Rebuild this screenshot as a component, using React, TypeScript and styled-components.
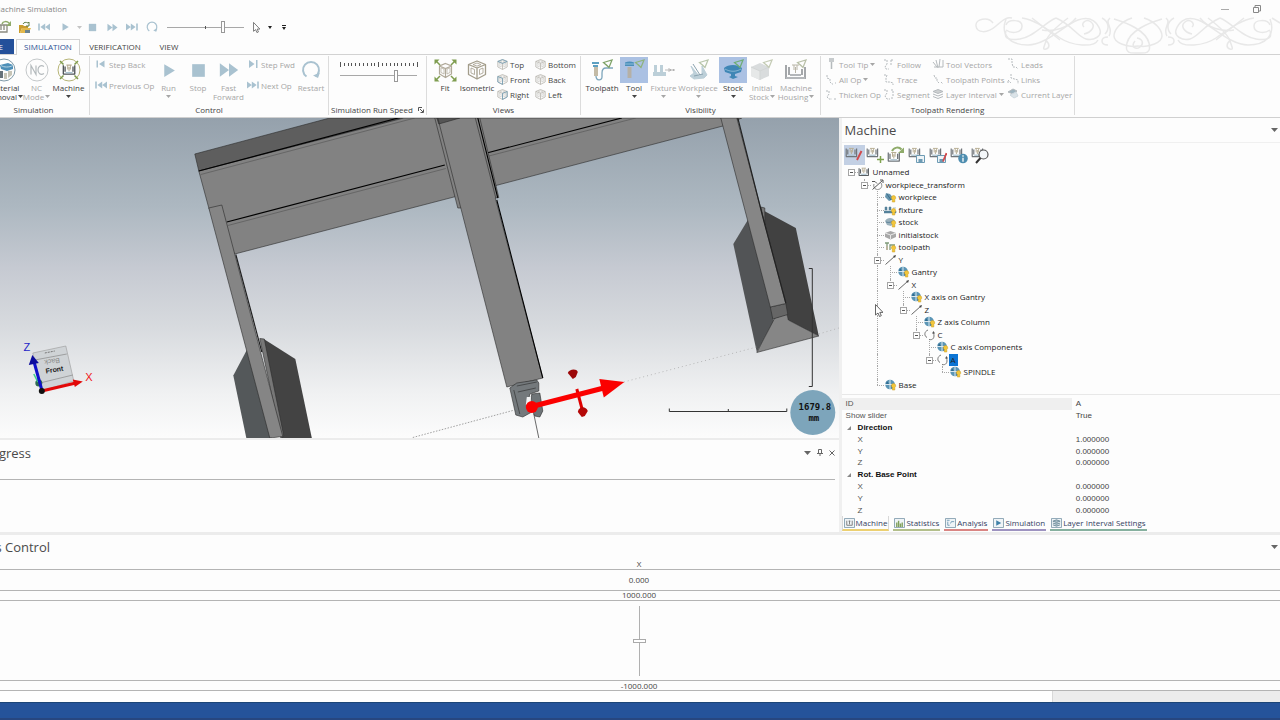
import React from 'react';
import styled, { createGlobalStyle } from 'styled-components';

const ui = '"Open Sans", "Noto Sans", sans-serif';
const line = '#b4b4b4';
const steel = '#a9c2d0';
const off = '#a6a6a6';

const Global = createGlobalStyle`
  *, *::before, *::after { box-sizing: border-box; }
  body { margin: 0; background: #fdfdfd; color: #444; font: 8px/9px ${ui}; }
  button, input { font: inherit; color: inherit; margin: 0; padding: 0; border: 0; background: none; }
  h1, h2, ul { margin: 0; padding: 0; font-weight: 400; list-style: none; }
  svg { display: block; flex: none; }
`;

/* ---------- frame ---------- */

const Page = styled.div`
  display: flex;
  flex-direction: column;
  min-height: 100vh;
  overflow: hidden;
`;
const Header = styled.header`
  position: relative;
  flex: none;
`;
const TitleBar = styled.div`
  display: flex;
  justify-content: space-between;
  align-items: center;
  height: 17px;
`;
const AppTitle = styled.h1`
  display: flex;
  justify-content: flex-end;
  width: 67px;
  overflow: hidden;
  white-space: nowrap;
  font-size: 8px;
  color: #858585;
`;
const WindowButtons = styled.div`
  display: flex;
  gap: 15px;
  padding-right: 15px;
`;
const PlainButton = styled.button`
  display: flex;
  align-items: center;
  justify-content: center;
  width: 17px;
  height: 15px;
`;
const Ornament = styled.svg`
  position: absolute;
  right: 0;
  top: 17px;
`;
const QuickBar = styled.div`
  display: flex;
  align-items: center;
  height: 21px;
  padding-bottom: 1px;
`;
const QuickButton = styled.button<{ $w: number }>`
  display: flex;
  align-items: center;
  justify-content: center;
  width: ${p => p.$w}px;
  height: 18px;
`;
const QuickClipped = styled(QuickButton)`
  justify-content: flex-end;
  overflow: hidden;
  padding-right: 2px;
`;
const Range = styled.input`
  appearance: none;
  display: block;
  width: 77px;
  height: 13px;
  background: linear-gradient(#a8a8a8, #a8a8a8) center / 100% 1px no-repeat;
  &::-webkit-slider-thumb {
    appearance: none;
    width: 4px;
    height: 12px;
    border: 1px solid #999;
    background: #fff;
  }
`;
const QuickRange = styled(Range)`
  margin: 0 3px 0 5px;
  background: linear-gradient(#555, #555) center / 1px 3px no-repeat, linear-gradient(#a8a8a8, #a8a8a8) center / 100% 1px no-repeat;
`;

const TabRow = styled.nav`
  display: flex;
  align-items: flex-end;
  height: 17px;
  border-bottom: 1px solid #d2d2d2;
`;
const FileTab = styled.button`
  display: flex;
  justify-content: flex-end;
  align-items: center;
  width: 14px;
  height: 15px;
  margin-right: 2px;
  padding-right: 11px;
  padding-bottom: 1px;
  overflow: hidden;
  background: #24509a;
  color: #fff;
`;
const RibbonTab = styled.button<{ $active?: boolean; $w: number }>`
  width: ${p => p.$w}px;
  height: ${p => (p.$active ? 16 : 15)}px;
  padding-bottom: ${p => (p.$active ? 3 : 1)}px;
  margin-bottom: ${p => (p.$active ? -1 : 0)}px;
  border: ${p => (p.$active ? '1px solid #d2d2d2' : '0')};
  border-bottom: 0;
  background: ${p => (p.$active ? '#fdfdfd' : 'none')};
  color: ${p => (p.$active ? '#2b4f94' : '#444')};
`;

/* ---------- ribbon ---------- */

const Ribbon = styled.div`
  display: flex;
  height: 63px;
  padding: 1px 0 2px;
  border-bottom: 1px solid #d0d0d0;
`;
const GroupClip = styled.section<{ $w: number }>`
  display: flex;
  justify-content: flex-end;
  flex: none;
  width: ${p => p.$w}px;
  border-right: 1px solid #dcdcdc;
  overflow: hidden;
`;
const GroupInner = styled.div<{ $w?: number }>`
  display: flex;
  flex-direction: column;
  flex: none;
  width: ${p => (p.$w ? p.$w + 'px' : '100%')};
`;
const GroupBody = styled.div<{ $pad: number }>`
  display: flex;
  height: 49px;
  padding-left: ${p => p.$pad}px;
`;
const GroupName = styled.div`
  display: flex;
  align-items: center;
  justify-content: center;
  gap: 5px;
  height: 11px;
`;
const BigButton = styled.button<{ $w: number; $dim?: boolean }>`
  display: flex;
  flex-direction: column;
  align-items: center;
  width: ${p => p.$w}px;
  height: 47px;
  padding-top: 1px;
  flex: none;
  white-space: nowrap;
  color: ${p => (p.$dim ? off : '#3c3c3c')};
`;
const BigIcon = styled.span<{ $on?: boolean }>`
  display: flex;
  align-items: center;
  justify-content: center;
  width: 28px;
  height: 26px;
  background: ${p => (p.$on ? '#abc1e3' : 'none')};
`;
const LabelLine = styled.span`
  display: flex;
  align-items: center;
  gap: 1px;
  height: 9px;
`;
const SmallColumn = styled.div<{ $w: number; $gap?: number; $pad?: number }>`
  display: flex;
  flex-direction: column;
  gap: ${p => p.$gap ?? 5}px;
  width: ${p => p.$w}px;
  padding: 3px 0 0 ${p => p.$pad ?? 0}px;
  flex: none;
`;
const SmallButton = styled.button<{ $dim?: boolean }>`
  display: flex;
  align-items: center;
  gap: 2px;
  height: 10px;
  white-space: nowrap;
  color: ${p => (p.$dim ? off : '#444')};
`;
const SpeedBox = styled.label`
  display: flex;
  flex-direction: column;
  gap: 1px;
  padding: 6px 0 0 6px;
`;

/* ---------- work area ---------- */

const Work = styled.main`
  display: grid;
  grid-template-columns: minmax(0, 19fr) minmax(0, 10fr);
  flex: 1;
  border-bottom: 3px solid #ececec;
`;
const LeftColumn = styled.div`
  display: flex;
  flex-direction: column;
  min-height: 0;
`;
const Viewport = styled.div`
  flex: 1;
  min-height: 320px;
  position: relative;
  background: linear-gradient(#95a1ac, #adb8c1 28%, #c6cad2 47%, #d7dade 65%, #f0f1f2 86%, #fcfcfc);
`;
const Scene = styled.svg`
  position: absolute;
  inset: 0;
  width: 100%;
  height: 100%;
`;
const ProgressPanel = styled.section`
  flex: none;
  height: 94px;
  border-top: 2px solid #ececec;
`;
const PanelHead = styled.div<{ $h: number; $pad: number }>`
  display: flex;
  align-items: center;
  justify-content: space-between;
  height: ${p => p.$h}px;
  padding-right: ${p => p.$pad}px;
`;
const PanelTitle = styled.h2`
  font-size: 13px;
  line-height: 16px;
  color: #4a4a4a;
  white-space: nowrap;
`;
const ClippedTitle = styled(PanelTitle)<{ $w: number }>`
  display: flex;
  justify-content: flex-end;
  width: ${p => p.$w}px;
  overflow: hidden;
`;
const HeadTools = styled.div`
  display: flex;
`;
const HeadTool = styled.button`
  display: flex;
  align-items: center;
  justify-content: center;
  width: 12px;
  height: 12px;
`;
const ProgressBody = styled.div`
  margin: 14px 4px 0 0;
  border-top: 1px solid ${line};
`;

const MachinePanel = styled.section`
  display: flex;
  flex-direction: column;
  border-left: 3px solid #f0f0f0;
  min-width: 0;
`;
const MachineHead = styled(PanelHead)`
  padding-left: 3px;
  border-bottom: 1px solid #f0f0f0;
`;
const MachineTools = styled.div`
  display: flex;
  height: 23px;
  padding: 2px 0 0 2px;
`;
const MachineTool = styled.button<{ $on?: boolean }>`
  display: flex;
  align-items: center;
  justify-content: center;
  width: 21px;
  height: 20px;
  background: ${p => (p.$on ? '#c3d0e4' : 'none')};
`;
const Tree = styled.ul`
  position: relative;
  display: grid;
  grid-auto-rows: 1fr;
  height: 225px;
  padding-left: 3px;
  color: #222;
`;
const TreeRow = styled.li`
  display: flex;
  align-items: center;
`;
const Guide = styled.span<{ $kind: string }>`
  position: relative;
  align-self: stretch;
  width: 13px;
  &::before {
    content: '';
    position: absolute;
    left: 6px;
    top: 0;
    height: ${p => (p.$kind === 'last' ? '50%' : '100%')};
    border-left: ${p => (p.$kind === 'blank' || p.$kind === 'root' ? '0' : '1px dotted #a8a8a8')};
  }
  &::after {
    content: '';
    position: absolute;
    left: 6px;
    top: 50%;
    width: 7px;
    border-top: ${p => (p.$kind === 'last' || p.$kind === 'tee' || p.$kind === 'root' ? '1px dotted #a8a8a8' : '0')};
  }
`;
const Expander = styled.button`
  position: absolute;
  z-index: 1;
  left: 3px;
  top: 3px;
  width: 7px;
  height: 7px;
  border: 1px solid #a5a5a5;
  background: linear-gradient(#555, #555) center / 3px 1px no-repeat #fff;
`;
const NodeIcon = styled.span`
  display: flex;
  justify-content: center;
  width: 13px;
`;
const NodeName = styled.span<{ $on?: boolean }>`
  padding: 1px 2px;
  line-height: 10px;
  background: ${p => (p.$on ? '#0b74d4' : 'none')};
`;
const Pointer = styled.svg`
  position: absolute;
  left: 33px;
  top: 138px;
`;
const Properties = styled.div`
  margin-top: 3px;
  padding-top: 3px;
  border-top: 1px solid #e8e8e8;
`;
const PropertyTable = styled.table`
  width: 100%;
  height: 118px;
  border-collapse: collapse;
  table-layout: fixed;
  font: 8px/9px "Liberation Sans", Arial, sans-serif;
  td, th { padding: 0 0 0 4px; text-align: left; font-weight: 400; }
`;
const NameCell = styled.th<{ $deep?: boolean; $first?: boolean; $bold?: boolean }>`
  && { padding-left: ${p => (p.$deep ? 16 : 4)}px; font-weight: ${p => (p.$bold ? 700 : 400)}; }
  width: 52.5%;
  color: ${p => (p.$bold ? '#111' : '#555')};
  background: ${p => (p.$first ? '#efefef' : 'none')};
`;
const Fold = styled.span`
  display: inline-flex;
  width: 12px;
  padding-left: 1px;
`;
const PanelTabs = styled.nav`
  display: flex;
  gap: 4px;
  height: 15px;
`;
const PanelTab = styled.button<{ $c: string; $on?: boolean }>`
  display: flex;
  align-items: center;
  gap: 1px;
  height: 15px;
  padding: 0 1px;
  white-space: nowrap;
  color: #33415f;
  border: ${p => (p.$on ? '1px solid #d8d8d8' : '0')};
  border-top: 0;
  border-bottom: 2px solid ${p => p.$c};
`;

/* ---------- axis control ---------- */

const AxisPanel = styled.section`
  flex: none;
`;
const AxisCell = styled.div<{ $h: number }>`
  display: flex;
  align-items: center;
  justify-content: center;
  height: ${p => p.$h}px;
  padding-right: 2px;
  border-bottom: 1px solid ${line};
`;
const AxisText = styled(AxisCell)`
  padding-bottom: 2px;
`;
const VerticalRange = styled.input`
  appearance: none;
  writing-mode: vertical-lr;
  direction: rtl;
  width: 13px;
  height: 70px;
  background: linear-gradient(#b0b0b0, #b0b0b0) center / 1px 100% no-repeat;
  &::-webkit-slider-thumb {
    appearance: none;
    width: 13px;
    height: 4px;
    border: 1px solid #aaa;
    background: #fff;
  }
`;
const ScrollTrack = styled.div`
  height: 11px;
  background: #ececec;
`;
const ScrollThumb = styled.div`
  width: 82.3%;
  height: 11px;
  background: #fefefe;
  border-right: 1px solid #d8d8d8;
`;
const Footer = styled.footer`
  flex: none;
  height: 18px;
  background: #25539a;
  border-top: 1px solid #1c4577;
  border-bottom: 2px solid #27467f;
`;

/* ---------- drawings ---------- */

const Caret = ({ c = '#444' }: { c?: string }) => (
  <svg width="5" height="3" viewBox="0 0 5 3"><path d="M0 0h5L2.5 3z" fill={c} /></svg>
);
const HeadCaret = () => (
  <svg width="7" height="4" viewBox="0 0 7 4"><path d="M0 0h7L3.500 4z" fill="#666" /></svg>
);

const Transport = ({ kind, s = 12, c = steel }: { kind: string; s?: number; c?: string }) => {
  const d: Record<string, string> = {
    play: 'M3 1.500L10.500 6L3 10.500z',
    stop: 'M2 2h8v8H2z',
    ff: 'M0.500 2L6 6L0.500 10zM6 2L11.500 6L6 10z',
    end: 'M0 2.500L4.800 6L0 9.500zM4.800 2.500L9.600 6L4.800 9.500zM10.200 2.500h1.600v7h-1.600z',
    start: 'M12 2.500L7.200 6L12 9.500zM7.200 2.500L2.400 6L7.200 9.500zM.2 2.500h1.600v7H.2z',
    back: 'M9.500 2.500L4 6L9.500 9.500zM1.500 2.500h1.500v7H1.500z',
    fwd: 'M2 2L7.500 6L2 10zM9 2h1.500v8H9z',
  };
  return <svg width={s} height={s} viewBox="0 0 12 12"><path d={d[kind]} fill={c} /></svg>;
};
const Restart = ({ s }: { s: number }) => (
  <svg width={s} height={s} viewBox="0 0 20 20" fill="none" stroke={steel} strokeWidth="2">
    <path d="M5.500 16.500A8 8 0 1 1 14.500 16.500" /><path d="M19 12.500l-2 5.500-5-2.500z" fill={steel} stroke="none" />
  </svg>
);

const MachineShape = ({ c = '#5a5f63' }: { c?: string }) => (
  <g fill="none" stroke={c} strokeWidth="1.200">
    <path d="M1.500 3v10M14.500 3v10M3.500 4.500v6M12.500 4.500v6M1 13.200h14" strokeWidth="1.500" />
    <path d="M5 3h6M6.500 3v5M9.500 3v5M8 5v5" stroke="#b7ad93" />
    <path d="M4 11.500h8" stroke={steel} strokeWidth="1.500" />
  </g>
);

type MachineKind = 'edit' | 'add' | 'open' | 'save' | 'saveEdit' | 'info' | 'find';
const MachineToolIcon = ({ kind }: { kind: MachineKind }) => (
  <svg width="18" height="18" viewBox="0 0 18 18" fill="none">
    <g transform={kind === 'open' ? 'translate(0 4) scale(.85)' : 'scale(.8)'}><MachineShape c="#70757a" /></g>
    {kind === 'edit' && <path d="M16.500 5L12 14" stroke="#d2494b" strokeWidth="2" />}
    {kind === 'add' && <path d="M14.500 10v7M11 13.500h7" stroke="#7fa24f" strokeWidth="1.500" />}
    {kind === 'open' && <><path d="M5 5c2-4 7-4.500 9.500-1.500" stroke="#8fab6a" strokeWidth="2" /><path d="M17 1.500v5.500h-6z" fill="#8fab6a" /></>}
    {(kind === 'save' || kind === 'saveEdit') && (
      <><path d="M8.500 9.500h8v7h-8z" fill="#eef4f7" stroke="#6d9bb4" /><path d="M10.500 13h4v3.500h-4z" fill="#6d9bb4" /></>
    )}
    {kind === 'saveEdit' && <path d="M17.500 7L14 15.500" stroke="#d2494b" strokeWidth="1.800" />}
    {kind === 'info' && <><circle cx="13" cy="12.500" r="4.800" fill="#4f8eb0" /><path d="M13 9.200v1.500M13 11.700v4" stroke="#fff" strokeWidth="1.300" /></>}
    {kind === 'find' && <><circle cx="12.500" cy="8.500" r="4.500" fill="#f4f7f9" stroke="#555" strokeWidth="1.200" /><path d="M9.500 12L5 17" stroke="#333" strokeWidth="2" /></>}
  </svg>
);

const RoundIcon = ({ kind }: { kind: 'material' | 'nc' | 'machine' }) => (
  <svg width="24" height="24" viewBox="0 0 24 24" fill="none">
    <circle cx="12" cy="12" r="11" stroke={kind === 'nc' ? '#c4c8ca' : kind === 'machine' ? '#b7b577' : '#7f9aa8'} />
    {kind === 'material' && (
      <><path d="M8 7l8-2 5 2v4l-6 2-6-2z" fill="#4d8fb8" /><path d="M9 7.500c3 2 8 2 12 0" stroke="#b6d3e2" /><path d="M3 14h6v6H5zM12 15h3v6h-3zM16 13h4v4l-4 3z" fill="#c6c4b6" /><path d="M8 13h3v7H8z" fill="#66727a" /></>
    )}
    {kind === 'nc' && <path d="M6 16.500v-9l5 9v-9M19 8.500c-3.500-2-6 .3-6 3.500s2.500 5.500 6 3.500" stroke="#b4babd" strokeWidth="1.200" />}
    {kind === 'machine' && (
      <><g transform="translate(5 4.500) scale(.88)"><MachineShape c="#4d5256" /></g>
        <path d="M3 3l3.500 3.500M21 3l-3.500 3.500M3 21l3.500-3.500M21 21l-3.500-3.500" stroke="#7d9a4c" strokeWidth="1.500" /></>
    )}
  </svg>
);

const Cube = ({ s, face = '' }: { s: number; face?: string }) => {
  const w = s > 15 ? 1.3 : 1.4;
  return (
    <svg width={s} height={s} viewBox="0 0 20 20" fill="none" stroke={s > 15 ? '#a39d8b' : '#b3b1a9'} strokeWidth={w} strokeLinejoin="round">
      <path d="M10 1L18.500 4.500V14.500L10 19L1.500 14.500V4.500z" />
      <path d="M1.500 4.500L10 8L18.500 4.500M10 8v11" />
      <path d="M4 8l3.500 1.500v5L4 13zM16 8l-3.500 1.500v5L16 13zM10 3L6 4.600l4 1.500 4-1.500z" strokeWidth=".8" />
      {face === 'top' && <path d="M10 1L18.500 4.500L10 8L1.500 4.500z" stroke="#6f9cb5" />}
      {face === 'front' && <path d="M1.500 4.500L10 8V19L1.500 14.500z" stroke="#6f9cb5" />}
      {face === 'right' && <path d="M18.500 4.500L10 8V19L18.500 14.500z" stroke="#6f9cb5" />}
    </svg>
  );
};
const FitIcon = () => (
  <svg width="23" height="23" viewBox="0 0 23 23" fill="none">
    <path d="M11.500 4.500l6 2.500v8l-6 3.500-6-3.500V7zM5.500 7l6 2.500 6-2.500M11.500 9.500v9" stroke="#b0a999" strokeWidth="1.200" />
    <path d="M7 8.800l3 1.200v5L7 13.500zM16 8.800L13 10v5l3-1.500z" stroke="#b0a999" strokeWidth=".7" />
    <path d="M2 2l4 4M21 2l-4 4M2 21l4-4M21 21l-4-4" stroke="#7f9d50" strokeWidth="1.500" />
    <path d="M.5 .5h5L.5 5.500zM22.500 .5h-5l5 5zM.5 22.500h5l-5-5zM22.500 22.500h-5l5-5z" fill="#7f9d50" />
  </svg>
);

const Flag = ({ c = '#8fb37e' }: { c?: string }) => <path d="M14.500 4.500L23 2L20 9.500zM17 6.500l3 3" stroke={c} strokeWidth="1.300" fill="none" />;
const VisIcon = ({ kind }: { kind: string }) => (
  <svg width="26" height="24" viewBox="0 0 26 24" fill="none">
    {kind === 'toolpath' && (
      <><path d="M3 4h7v2H3zM4 7h5v2H4z" fill="#5d9fc0" /><path d="M5 9h4v9H5z" fill="#c4bba6" />
        <path d="M7 18c0 5 6 5 6 1v-4c0-4 2-5 4-5h7" stroke="#7da6bc" strokeWidth="1.300" /><Flag c="#7fa368" /></>
    )}
    {kind === 'tool' && (
      <><path d="M4 4.500c3-1.500 6-1.500 9 0v3.500H4z" fill="#4a8fbb" /><path d="M4 6h9" stroke="#8dbdd8" /><path d="M6.500 9h4v11h-4z" fill="#b5b0a6" /><Flag /></>
    )}
    {kind === 'fixture' && (
      <><path d="M2 14h13v4H2zM3 7h3v7H3zM9 7h3v7H9z" fill="#bccfd8" />
        <path d="M14 12h4M18 10v4" stroke="#bbb" /><path d="M18.500 12h6" stroke="#999" strokeWidth="1.500" strokeDasharray="2 1" /></>
    )}
    {kind === 'workpiece' && (
      <><path d="M6 8l3 7-4 3 4 3 10-1 3-3-5-9v9l-3 1z" fill="#bccfd8" stroke="#bccfd8" /><path d="M8 6l7 11M9 18l9-2" stroke="#8ba3af" /><Flag c="#b9c7ad" /></>
    )}
    {kind === 'stock' && (
      <><path d="M4 10c4-4 14-4 18 0l-1 4-6 2v2l3 1-5 2-4-2 2-1v-2l-6-2z" fill="#3f86b5" /><path d="M5 11c5 3 11 3 16 0" stroke="#85b5d3" /><Flag c="#6fae76" /></>
    )}
    {kind === 'initial' && (
      <><path d="M2 9l9-4 9 4v9l-9 4-9-4z" fill="#d9dcdd" /><path d="M2 9l9 4v9l-9-4z" fill="#e6e8e8" /><path d="M2 9l9 4 9-4M11 13v9" stroke="#d2d5d5" /><Flag c="#c5ccb6" /></>
    )}
    {kind === 'housing' && (
      <><path d="M3 7v14M6 9v8M22 9v12M19 11v6" stroke="#a4a7aa" strokeWidth="2" /><path d="M3 20h19M7 17h11" stroke="#b4b7ba" strokeWidth="2" />
        <path d="M9 7h7M11 7v5M14 7v5M12.500 9v6" stroke="#b9b5a7" /><Flag c="#b9c0a8" /></>
    )}
  </svg>
);

const RenderIcon = ({ kind }: { kind: string }) => {
  const paths: Record<string, string> = {
    tip: 'M4 1h5M4 3h5M6.500 4v7', all: 'M2 2v3l3 1v3l2 2h1M10 10h1', thicken: 'M1 3h3v3L2 9l2 2h3M9 11h2',
    follow: 'M1 2h3v4L2 9l1 2h3M8 2h3M8 2v6', trace: 'M1 2h3L3 5v4h4l3 1v2', segment: 'M1 2h3v3L2 8l2 3h3M8 2h2v6M8 10h3',
    vectors: 'M1 4l4 5M4 2l2 8M8 1L7 9M11 2v7M2 9h9', points: 'M2 2l1 3h2v3l2 2M9 9l2 2', leads: 'M1 1h4v4l1 4h2M9 9l2 2',
    links: 'M1 10V7l3 3M4 1v4l7 2v4', };
  return (
    <svg width="12" height="12" viewBox="0 0 12 12" fill="none" stroke="#b5babd">
      {paths[kind] && <path d={paths[kind]} strokeDasharray={kind === 'tip' || kind === 'vectors' ? undefined : '2 1'} strokeWidth={kind === 'tip' ? 1.5 : 1} />}
      {kind === 'layers' && <><path d="M1 3.500L6 1.500l5 2-5 2z" fill="#cdd0d1" /><path d="M1 6l5 2 5-2M1 8.500l5 2 5-2" /></>}
      {kind === 'current' && <><path d="M1 4l5-3 4 2-4 3z" fill="#9eb4bf" /><path d="M3 7l4 3 4-2-2-4z" fill="#dbe3e8" stroke="#cdd8de" /></>}
    </svg>
  );
};

const TreeIcon = ({ kind }: { kind: string }) => (
  <svg width="13" height="12" viewBox="0 0 13 12" fill="none">
    {kind === 'machine' && <g transform="translate(0 0) scale(.72)"><MachineShape /></g>}
    {kind === 'transform' && <><path d="M10 4c2 3 0 6.500-3.500 6.500C4 10.500 2 8 3 5" stroke="#888" /><path d="M1.500 10.500L11.500 1.500M12 1v3M12 1H9M1 2.500h3l2 2" stroke="#555" /></>}
    {kind === 'linear' && <><path d="M1.500 10.500L11 2" stroke="#666" /><path d="M12 1l-1 3-2-2z" fill="#444" /></>}
    {kind === 'rotary' && <><path d="M5 1C1 2.500 1 7 4 8.500M6 10.500c4 1 6-2 4.500-6.500" stroke="#777" /><path d="M9 4.500L10.500 2l1.500 2.500z" fill="#555" /></>}
    {kind === 'body' && (
      <><circle cx="6" cy="5.500" r="4.800" fill="#5b95b5" /><path d="M1 5.500h10M6 1v9" stroke="#dbe8ef" /><path d="M3 2l2 3H2zM7 6l3 1-2 3z" fill="#2f6b90" /></>
    )}
    {kind === 'workpiece' && <><path d="M2 2l4 1 4 5-5 2-4-4z" fill="#6594ae" /><path d="M3 3l4 6" stroke="#3d6d89" /></>}
    {kind === 'fixture' && <path d="M1 3h2v3H1zM5 3h2v3H5zM0 7h12v2H0zM9 4h3" fill="#54819b" stroke="#54819b" strokeWidth=".5" />}
    {kind === 'stock' && <><path d="M1 5c2-4 8-4 10 0l-2 3-2 2-4-1z" fill="#9bb1bc" /><path d="M2 6c3 1 5 0 8-1" stroke="#5d8299" /></>}
    {kind === 'initial' && <><path d="M1 4l5.500-2L12 4v4l-5.500 2.500L1 8z" fill="#a8a8a8" /><path d="M1 4l5.500 2L12 4M6.500 6v4" stroke="#e8e8e8" /></>}
    {kind === 'toolpath' && <><path d="M1 2h4M3 2v7M6 9V4h5" stroke="#7f9a79" strokeWidth="1.300" /><path d="M2 5h2v4H2z" fill="#bbb49d" /></>}
    {['body', 'workpiece', 'fixture', 'stock', 'toolpath'].includes(kind) && (
      <path d="M9.500 4.500a2.200 2.200 0 0 1 1.300 4V11H8.300V8.500a2.200 2.200 0 0 1 1.200-4z" fill="#f2c63b" stroke="#c99a1f" strokeWidth=".5" />
    )}
  </svg>
);

const TabIcon = ({ kind }: { kind: string }) => (
  <svg width="11" height="10" viewBox="0 0 12 11" fill="none">
    <path d="M.5 .5h11v10H.5z" fill="#eff4f7" stroke="#86a0af" />
    {kind === 'machine' && <path d="M3 3v5M9 3v5M5 3.500h2M6 3v4M3 8h6" stroke="#777" />}
    {kind === 'stats' && <path d="M3 5v5M5 3v7M7 6v4M9 5v5" stroke="#7fa05b" strokeWidth="1.500" />}
    {kind === 'analysis' && <path d="M2 2.500h3M3 4v4h2M6 6l1-2h3" stroke="#6f9bb5" />}
    {kind === 'sim' && <path d="M3.500 2.500L9 5.500L3.500 8.500z" fill="#3f81a8" />}
    {kind === 'layers' && <path d="M2 3.500L6 2l4 1.500L6 5zM2 5.500L6 7l4-1.500M2 7.500L6 9l4-1.500" stroke="#6c8c9b" fill="#a5bac4" />}
  </svg>
);

const PointerShape = () => (
  <path d="M.5 .5v10.500l2.500-2 1.500 3.500 1.800-.8L4.800 8.400h3.200z" fill="#fff" stroke="#555" strokeWidth=".9" />
);

const Flourish = () => (
  <Ornament width="308" height="38" viewBox="0 0 308 38" fill="none" stroke="#e8e8e8" strokeWidth="1.500">
    <path d="M21 6C16-1 3 2 4 9s11 8 20 0 12-9 16-8" />
    {[0, 1].map(i => (
      <g key={i} transform={i ? 'translate(332 0) scale(-1 1)' : undefined}>
        <path d="M34 2C28 18 38 28 56 28S92 8 106 3s20 4 22 10-6 11-14 9-14-14-30-21" />
        <path d="M34 8c2-6 16-6 16 1s-10 8-16 4M50 1c14 2 26 12 38 20s34 10 38 2" />
        <path d="M84 1C72 6 62 20 48 22s-16-2-14-8M96 1C84 10 76 18 74 24s-4 9 0 8 4-6-1-9M60 1l28 22" />
        <path d="M104 1c-8 10-22 14-34 12M112 17c8-2 12-8 7-12s-11 2-7 5" />
        <path d="M130 1c8 4 7 12 3 16M136 20c-8 0-8 8 0 8M138 1c-6 5 4 10-1 18" />
        <path d="M142 2c14 4 32 12 35 24s-6 10-11 10M160 1c-12 4-18 12-18 18s12 12 24 10" />
      </g>
    ))}
    <path d="M163 24c-5 6 1 9 5 6s3-8-3-9" /><path d="M300 1l8 5" />
  </Ornament>
);

const SceneArt = () => (
  <Scene viewBox="0 118 839 320" preserveAspectRatio="xMidYMid slice" role="img" aria-label="Gantry machine">
    <g stroke="#2a2a2a" strokeWidth=".6" strokeLinejoin="round">
      <path d="M195 154L330 118H404L199 171z" fill="#5e5e5e" />
      <path d="M199 171L404 118H742L723 126L498 185L454 197L235 254L209 208z" fill="#828282" />
      <path d="M201 174.500L415 118M228 225.500L446 168.500M489 156L636 118" fill="none" stroke="#4a4a4a" strokeWidth=".5" />
      <path d="M199 171L402 117M227 222L445 165M487 153L622 118" fill="none" stroke="#000" strokeWidth="1.200" />
      {/* left leg and its foot */}
      <path d="M247 350L233.500 375.500L246.500 438H272z" fill="#54585a" stroke="none" />
      <path d="M264 339L295.500 359L312 438H282z" fill="#434343" stroke="none" />
      <path d="M260 338.500l4.500 .5L284 436l-3 2z" fill="#777" />
      <path d="M209 208L222 205L283 436.500L270 438z" fill="#858585" />
      <path d="M236 254.500L253 318L262 352" fill="none" stroke="#222" strokeWidth="1.200" />
      {/* right leg and its foot */}
      <path d="M748 220L733.500 244L757 352L774 321L771 306z" fill="#525456" stroke="none" />
      <path d="M761 209L796 228L819 336L788 320L784 296z" fill="#414141" stroke="none" />
      <path d="M757 352.500L775 318L787 314L788.500 320L819 336z" fill="#868686" />
      <path d="M770.500 307L786 303.500L788 314.500L773 319z" fill="#666" />
      <path d="M761 207l4 1v17z" fill="#777" />
      <path d="M721 118H737L786 303.500L770.500 307z" fill="#868686" />
      <path d="M738 118L763 217L786 303" fill="none" stroke="#222" strokeWidth="1.200" />
      {/* column */}
      <path d="M435 118H480L499 197.500L495.500 198L543 378L507 387L461 208H458z" fill="#828282" />
      <path d="M437 118H460L439 124z" fill="#555" />
      <path d="M438 118L461 208M475.500 118L496 198" fill="none" />
      <path d="M478 118L498 198M497 200L543 378" fill="none" stroke="#000" strokeWidth="1.100" />
      {/* spindle head */}
      <path d="M510 388l7-5 20-3 2 3v8l-9 3-2 10 4 8-9 5-7-2z" fill="#74797c" />
      <path d="M517 386l20-4M514 390l6 24M518 392l18-4" fill="none" />
      <path d="M532 394l8-1 3 18-3 6-5-1-5-11z" fill="#6e7477" />
      <path d="M527 397h4v6l-5 2z" fill="#f3f4f5" stroke="none" />
    </g>
    <g stroke="#8a8a8a" strokeWidth=".8" fill="none">
      <path d="M413 437.500L513 410.500" strokeDasharray="1.500 1.500" />
      <path d="M624 382L757 347M819 334L839 328" stroke="#aaa" strokeDasharray="1 3" />
      <path d="M534 414L539 438" stroke="#444" />
    </g>
    <g fill="#fb0000">
      <path d="M577 389L582.500 410" stroke="#e00000" strokeWidth="3" />
      <path d="M532 406.500L604 388" stroke="#fb0000" strokeWidth="5" />
      <path d="M599.500 379L624.500 382L604 397.500z" />
      <circle cx="532" cy="407" r="6" />
      <path d="M568 373c1-4 9-5 10-1l-2 5-3 2z" fill="#9c0808" />
      <path d="M578 412c1-6 8-6 10-1l-3 5-3 1z" fill="#b40808" />
    </g>
    <path d="M809 268.500H812.500V386.500H809M669.500 408.500V411.500H787V408.500M728.500 411v-2" stroke="#333" fill="none" />
    <circle cx="813" cy="412.500" r="22.500" fill="#7da5bb" />
    <g fontFamily="DejaVu Sans Mono, monospace" fontWeight="700" fontSize="9" fill="#111" textAnchor="middle">
      <text x="815" y="410">1679.8</text>
      <text x="814" y="421">mm</text>
    </g>
    {/* orientation gizmo */}
    <path d="M33 353L66 346L74 381L42 391z" fill="#cfd3d6" stroke="#999" strokeWidth=".6" />
    <path d="M35 360L67 354M40 383L73 375" stroke="#888" strokeWidth=".7" fill="none" />
    <path d="M45 353l10-2" stroke="#777" strokeDasharray="2 1" />
    <g fontFamily="Liberation Sans, sans-serif" fontSize="7" textAnchor="middle">
      <text transform="translate(55 372) rotate(-9)" fontWeight="700" fill="#222">Front</text>
      <text transform="translate(52 359) rotate(172)" fill="#888">Back</text>
    </g>
    <circle cx="39" cy="383" r="3.500" fill="#2e6b52" /><path d="M34 374l4 8" stroke="#3fd08a" strokeWidth="1.500" />
    <path d="M42 390L34 361" stroke="#1010c8" strokeWidth="3" /><path d="M29 365L32.500 355L39 363z" fill="#0c0c9c" />
    <path d="M42 391L76 383" stroke="#e20808" strokeWidth="3" /><path d="M73 379.500L83 381.500L75 387z" fill="#e20808" />
    <circle cx="42" cy="391" r="3" fill="#111" />
    <g fontFamily="Liberation Sans, sans-serif" fontSize="11" textAnchor="middle">
      <text x="27" y="351" fill="#2424c8">Z</text><text x="89" y="381" fill="#f01818">X</text>
    </g>
  </Scene>
);

/* ---------- pieces ---------- */

const Big = ({ w, label, second, icon, dim, on, drop }: {
  w: number; label: string; second?: string; icon: React.ReactNode; dim?: boolean; on?: boolean; drop?: boolean;
}) => (
  <BigButton $w={w} $dim={dim}>
    <BigIcon $on={on}>{icon}</BigIcon>
    <LabelLine>{label}</LabelLine>
    {(second || drop) && <LabelLine>{second}{drop && <Caret c={dim ? off : '#444'} />}</LabelLine>}
  </BigButton>
);
const Small = ({ label, icon, dim, drop }: { label: string; icon: React.ReactNode; dim?: boolean; drop?: boolean }) => (
  <SmallButton $dim={dim}>{icon}<span>{label}</span>{drop && <Caret c={off} />}</SmallButton>
);
const Group = ({ w, inner, pad = 0, name, extra, children }: {
  w: number; inner?: number; pad?: number; name: string; extra?: React.ReactNode; children: React.ReactNode;
}) => (
  <GroupClip $w={w}>
    <GroupInner $w={inner}>
      <GroupBody $pad={pad}>{children}</GroupBody>
      <GroupName>{name}{extra}</GroupName>
    </GroupInner>
  </GroupClip>
);

const nodes: { g: string[]; icon: string; name: string; open?: boolean; on?: boolean }[] = [
  { g: ['root'], icon: 'machine', name: 'Unnamed', open: true },
  { g: ['blank', 'last'], icon: 'transform', name: 'workpiece_transform', open: true },
  { g: ['blank', 'blank', 'tee'], icon: 'workpiece', name: 'workpiece' },
  { g: ['blank', 'blank', 'tee'], icon: 'fixture', name: 'fixture' },
  { g: ['blank', 'blank', 'tee'], icon: 'stock', name: 'stock' },
  { g: ['blank', 'blank', 'tee'], icon: 'initial', name: 'initialstock' },
  { g: ['blank', 'blank', 'tee'], icon: 'toolpath', name: 'toolpath' },
  { g: ['blank', 'blank', 'tee'], icon: 'linear', name: 'Y', open: true },
  { g: ['blank', 'blank', 'bar', 'tee'], icon: 'body', name: 'Gantry' },
  { g: ['blank', 'blank', 'bar', 'last'], icon: 'linear', name: 'X', open: true },
  { g: ['blank', 'blank', 'bar', 'blank', 'tee'], icon: 'body', name: 'X axis on Gantry' },
  { g: ['blank', 'blank', 'bar', 'blank', 'last'], icon: 'linear', name: 'Z', open: true },
  { g: ['blank', 'blank', 'bar', 'blank', 'blank', 'tee'], icon: 'body', name: 'Z axis Column' },
  { g: ['blank', 'blank', 'bar', 'blank', 'blank', 'last'], icon: 'rotary', name: 'C', open: true },
  { g: ['blank', 'blank', 'bar', 'blank', 'blank', 'blank', 'tee'], icon: 'body', name: 'C axis Components' },
  { g: ['blank', 'blank', 'bar', 'blank', 'blank', 'blank', 'last'], icon: 'rotary', name: 'A', open: true, on: true },
  { g: ['blank', 'blank', 'bar', 'blank', 'blank', 'blank', 'blank', 'last'], icon: 'body', name: 'SPINDLE' },
  { g: ['blank', 'blank', 'last'], icon: 'body', name: 'Base' },
];

const props: { n: string; v?: string; head?: boolean; deep?: boolean }[] = [
  { n: 'ID', v: 'A' }, { n: 'Show slider', v: 'True' },
  { n: 'Direction', head: true },
  { n: 'X', v: '1.000000', deep: true }, { n: 'Y', v: '0.000000', deep: true }, { n: 'Z', v: '0.000000', deep: true },
  { n: 'Rot. Base Point', head: true },
  { n: 'X', v: '0.000000', deep: true }, { n: 'Y', v: '0.000000', deep: true }, { n: 'Z', v: '0.000000', deep: true },
];

const machineTools: [MachineKind, string][] = [
  ['edit', 'Edit machine'], ['add', 'Add machine'], ['open', 'Open machine'], ['save', 'Save machine'],
  ['saveEdit', 'Save machine as'], ['info', 'Machine info'], ['find', 'Inspect machine'],
];

export default function App() {
  return (
    <Page>
      <Global />
      <Header>
        <Flourish />
        <TitleBar>
          <AppTitle>Machine Simulation</AppTitle>
          <WindowButtons>
            <PlainButton aria-label="Minimize"><svg width="8" height="8"><path d="M0 4.500h8" stroke="#aaa" /></svg></PlainButton>
            <PlainButton aria-label="Restore">
              <svg width="8" height="8" fill="none" stroke="#888"><path d="M.5 2.500h5v5h-5zM2 2V.5h5.500V6H6" /></svg>
            </PlainButton>
          </WindowButtons>
        </TitleBar>
        <QuickBar>
          <QuickClipped $w={14} aria-label="Open machine">
            <svg width="15" height="14" viewBox="0 0 15 14" fill="none"><path d="M1 5h9v7H1zM4 5v5M7 5v5" stroke="#8b8b80" strokeWidth="1.300" /><path d="M5 4c1-3 5-3 7-1" stroke="#8fab6a" strokeWidth="1.500" /><path d="M14 1v5H9z" fill="#8fab6a" /></svg>
          </QuickClipped>
          <QuickButton $w={20} aria-label="Open folder">
            <svg width="13" height="13" viewBox="0 0 13 13" fill="none"><path d="M1 4h4l1 1h4v2H4l-2 5H1z" fill="#c99c2e" /><path d="M4 7h9l-2.500 5H2z" fill="#e2b84c" /><path d="M5 3c1-2 3-2 5-1l1-1v4H8" stroke="#5d7d45" /><path d="M7 9h5v3H7z" fill="#6b8492" /></svg>
          </QuickButton>
          <QuickButton $w={20} aria-label="Start"><Transport kind="start" /></QuickButton>
          <QuickButton $w={22} aria-label="Play"><Transport kind="play" s={10} /></QuickButton>
          <QuickButton $w={6} aria-label="Play options"><Caret c="#c4c4c4" /></QuickButton>
          <QuickButton $w={20} aria-label="Stop"><Transport kind="stop" s={11} /></QuickButton>
          <QuickButton $w={20} aria-label="Fast forward"><Transport kind="ff" s={11} /></QuickButton>
          <QuickButton $w={20} aria-label="End"><Transport kind="end" /></QuickButton>
          <QuickButton $w={20} aria-label="Restart"><Restart s={12} /></QuickButton>
          <QuickRange type="range" aria-label="Speed" defaultValue={74} />
          <QuickButton $w={18} aria-label="Pointer mode">
            <svg width="7" height="11" viewBox="0 0 8 13"><PointerShape /></svg>
          </QuickButton>
          <QuickButton $w={10} aria-label="Pointer options"><svg width="4" height="3"><path d="M0 0h4L2 3z" fill="#222" /></svg></QuickButton>
          <QuickButton $w={18} aria-label="Customize">
            <svg width="4" height="5" viewBox="0 0 4 5"><path d="M0 0h4v1H0zM0 2h4L2 5z" fill="#222" /></svg>
          </QuickButton>
        </QuickBar>
        <TabRow>
          <FileTab>FILE</FileTab>
          <RibbonTab $w={64} $active>SIMULATION</RibbonTab>
          <RibbonTab $w={70}>VERIFICATION</RibbonTab>
          <RibbonTab $w={38}>VIEW</RibbonTab>
        </TabRow>
        <Ribbon>
          <Group w={90} inner={111} pad={9} name="Simulation">
            <Big w={34} label="Material" second="Removal" drop icon={<RoundIcon kind="material" />} />
            <Big w={31} label="NC" second="Mode" dim drop icon={<RoundIcon kind="nc" />} />
            <Big w={33} label="Machine" drop icon={<RoundIcon kind="machine" />} />
          </Group>
          <Group w={239} pad={5} name="Control">
            <SmallColumn $w={59} $gap={11}>
              <Small dim label="Step Back" icon={<Transport kind="back" />} />
              <Small dim label="Previous Op" icon={<Transport kind="start" />} />
            </SmallColumn>
            <Big w={29} label="Run" dim drop icon={<Transport kind="play" s={17} />} />
            <Big w={30} label="Stop" dim icon={<Transport kind="stop" s={19} />} />
            <Big w={31} label="Fast" second="Forward" dim icon={<Transport kind="ff" s={20} />} />
            <SmallColumn $w={51} $gap={11} $pad={3}>
              <Small dim label="Step Fwd" icon={<Transport kind="fwd" />} />
              <Small dim label="Next Op" icon={<Transport kind="end" />} />
            </SmallColumn>
            <Big w={32} label="Restart" dim icon={<Restart s={20} />} />
          </Group>
          <Group w={98} name="Simulation Run Speed" pad={5} extra={
            <svg width="6" height="6" viewBox="0 0 6 6" fill="none"><path d="M.5 4V.5H4M2 2l3 3M5.500 2.500v3h-3" stroke="#555" /></svg>
          }>
            <SpeedBox>
              <svg width="78" height="6">
                {Array.from({ length: 21 }, (_, i) => (
                  <rect key={i} x={Math.round(i * 3.83)} y={i % 10 ? 1 : 0} width="1" height={i % 10 ? 3 : 5} fill="#555" />
                ))}
              </svg>
              <Range type="range" aria-label="Simulation run speed" defaultValue={74} />
            </SpeedBox>
          </Group>
          <Group w={154} pad={2} name="Views">
            <Big w={32} label="Fit" icon={<FitIcon />} />
            <Big w={32} label="Isometric" icon={<Cube s={20} />} />
            <SmallColumn $w={42} $pad={4}>
              <Small label="Top" icon={<Cube s={11} face="top" />} />
              <Small label="Front" icon={<Cube s={11} face="front" />} />
              <Small label="Right" icon={<Cube s={11} face="right" />} />
            </SmallColumn>
            <SmallColumn $w={42}>
              <Small label="Bottom" icon={<Cube s={11} />} />
              <Small label="Back" icon={<Cube s={11} />} />
              <Small label="Left" icon={<Cube s={11} />} />
            </SmallColumn>
          </Group>
          <Group w={240} pad={5} name="Visibility">
            <Big w={32} label="Toolpath" icon={<VisIcon kind="toolpath" />} />
            <Big w={32} label="Tool" on drop icon={<VisIcon kind="tool" />} />
            <Big w={27} label="Fixture" dim drop icon={<VisIcon kind="fixture" />} />
            <Big w={42} label="Workpiece" dim drop icon={<VisIcon kind="workpiece" />} />
            <Big w={28} label="Stock" on drop icon={<VisIcon kind="stock" />} />
            <Big w={30} label="Initial" second="Stock" dim drop icon={<VisIcon kind="initial" />} />
            <Big w={38} label="Machine" second="Housing" dim drop icon={<VisIcon kind="housing" />} />
          </Group>
          <Group w={254} pad={4} name="Toolpath Rendering">
            <SmallColumn $w={58}>
              <Small dim drop label="Tool Tip" icon={<RenderIcon kind="tip" />} />
              <Small dim drop label="All Op" icon={<RenderIcon kind="all" />} />
              <Small dim label="Thicken Op" icon={<RenderIcon kind="thicken" />} />
            </SmallColumn>
            <SmallColumn $w={49}>
              <Small dim label="Follow" icon={<RenderIcon kind="follow" />} />
              <Small dim label="Trace" icon={<RenderIcon kind="trace" />} />
              <Small dim label="Segment" icon={<RenderIcon kind="segment" />} />
            </SmallColumn>
            <SmallColumn $w={75}>
              <Small dim label="Tool Vectors" icon={<RenderIcon kind="vectors" />} />
              <Small dim label="Toolpath Points" icon={<RenderIcon kind="points" />} />
              <Small dim drop label="Layer Interval" icon={<RenderIcon kind="layers" />} />
            </SmallColumn>
            <SmallColumn $w={64}>
              <Small dim label="Leads" icon={<RenderIcon kind="leads" />} />
              <Small dim label="Links" icon={<RenderIcon kind="links" />} />
              <Small dim label="Current Layer" icon={<RenderIcon kind="current" />} />
            </SmallColumn>
          </Group>
        </Ribbon>
      </Header>

      <Work>
        <LeftColumn>
          <Viewport><SceneArt /></Viewport>
          <ProgressPanel>
            <PanelHead $h={25} $pad={1}>
              <ClippedTitle $w={31}>Progress</ClippedTitle>
              <HeadTools>
                <HeadTool aria-label="Panel menu"><HeadCaret /></HeadTool>
                <HeadTool aria-label="Pin panel"><svg width="6" height="7" fill="none"><path d="M1.500 4V.5h3V4M0 4.500h6M3 5v2" stroke="#666" /></svg></HeadTool>
                <HeadTool aria-label="Close panel"><svg width="6" height="6"><path d="M.5 .5l5 5M5.500 .5l-5 5" stroke="#666" /></svg></HeadTool>
              </HeadTools>
            </PanelHead>
            <ProgressBody />
          </ProgressPanel>
        </LeftColumn>

        <MachinePanel>
          <MachineHead $h={25} $pad={0}>
            <PanelTitle>Machine</PanelTitle>
            <HeadTool aria-label="Machine panel menu"><HeadCaret /></HeadTool>
          </MachineHead>
          <MachineTools>
            {machineTools.map(([k, label], i) => (
              <MachineTool key={k} $on={i === 0} aria-label={label}><MachineToolIcon kind={k} /></MachineTool>
            ))}
          </MachineTools>
          <Tree>
            {nodes.map(n => (
              <TreeRow key={n.name}>
                {n.g.map((k, i) => (
                  <Guide key={i} $kind={k}>{n.open && i === n.g.length - 1 && <Expander aria-label={'Collapse ' + n.name} />}</Guide>
                ))}
                <NodeIcon><TreeIcon kind={n.icon} /></NodeIcon>
                <NodeName $on={n.on}>{n.name}</NodeName>
              </TreeRow>
            ))}
            <Pointer width="8" height="13" viewBox="0 0 8 13"><PointerShape /></Pointer>
          </Tree>
          <Properties>
            <PropertyTable>
              <tbody>
                {props.map((p, i) => (
                  <tr key={i}>
                    <NameCell scope="row" $deep={p.deep} $bold={p.head} $first={i === 0}>
                      {p.head && <Fold><svg width="4" height="4"><path d="M4 0v4H0z" fill="#888" /></svg></Fold>}
                      {p.n}
                    </NameCell>
                    <td>{p.v}</td>
                  </tr>
                ))}
              </tbody>
            </PropertyTable>
          </Properties>
          <PanelTabs>
            <PanelTab $on $c="#ecd071"><TabIcon kind="machine" />Machine</PanelTab>
            <PanelTab $c="#b3bf8b"><TabIcon kind="stats" />Statistics</PanelTab>
            <PanelTab $c="#d98583"><TabIcon kind="analysis" />Analysis</PanelTab>
            <PanelTab $c="#9d93c0"><TabIcon kind="sim" />Simulation</PanelTab>
            <PanelTab $c="#86b09f"><TabIcon kind="layers" />Layer Interval Settings</PanelTab>
          </PanelTabs>
        </MachinePanel>
      </Work>

      <AxisPanel>
        <PanelHead $h={24} $pad={0}>
          <ClippedTitle $w={50}>Axis Control</ClippedTitle>
          <HeadTool aria-label="Axis panel menu"><HeadCaret /></HeadTool>
        </PanelHead>
        <AxisText $h={11}>X</AxisText>
        <AxisText $h={21}>0.000</AxisText>
        <AxisText $h={10}>1000.000</AxisText>
        <AxisCell $h={80}><VerticalRange type="range" aria-label="X axis position" min={-1000} max={1000} defaultValue={0} /></AxisCell>
        <AxisCell $h={10}>-1000.000</AxisCell>
        <ScrollTrack><ScrollThumb /></ScrollTrack>
      </AxisPanel>
      <Footer />
    </Page>
  );
}
